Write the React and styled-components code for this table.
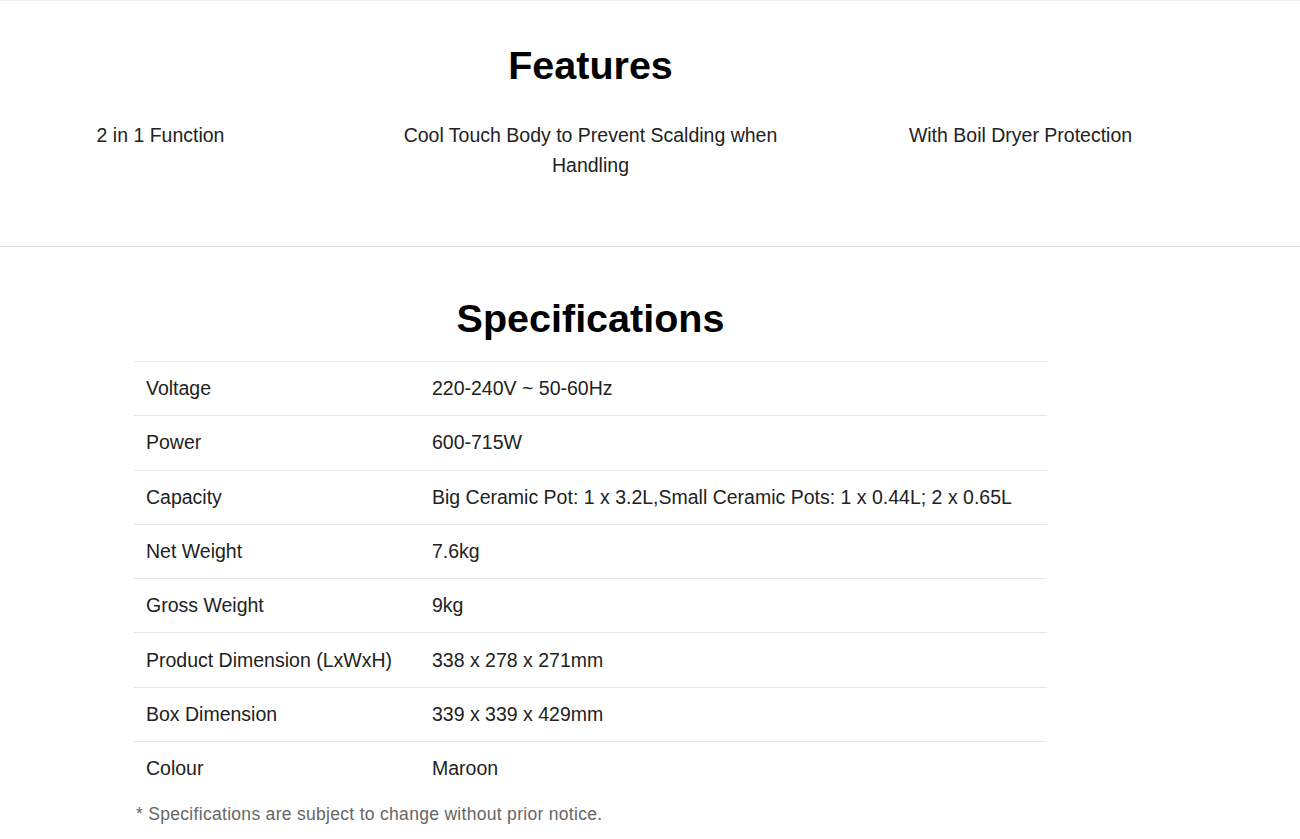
import React from "react";
import styled, { createGlobalStyle } from "styled-components";

const GlobalStyle = createGlobalStyle`
  body {
    margin: 0;
    background: #fff;
    font-family: "Liberation Sans", Arial, sans-serif;
    color: #222;
  }
`;

const features = [
  "2 in 1 Function",
  "Cool Touch Body to Prevent Scalding when Handling",
  "With Boil Dryer Protection",
];

const specs = [
  ["Voltage", "220-240V ~ 50-60Hz"],
  ["Power", "600-715W"],
  ["Capacity", "Big Ceramic Pot: 1 x 3.2L,Small Ceramic Pots: 1 x 0.44L; 2 x 0.65L"],
  ["Net Weight", "7.6kg"],
  ["Gross Weight", "9kg"],
  ["Product Dimension (LxWxH)", "338 x 278 x 271mm"],
  ["Box Dimension", "339 x 339 x 429mm"],
  ["Colour", "Maroon"],
];

function App() {
  return (
    <>
      <GlobalStyle />
      <FeaturesSection>
        <Inner>
          <Heading>Features</Heading>
          <FeatureRow>
            {features.map((f) => (
              <Feature key={f}>{f}</Feature>
            ))}
          </FeatureRow>
        </Inner>
      </FeaturesSection>
      <SpecsSection>
        <Inner>
          <Heading>Specifications</Heading>
          <SpecTable>
            <tbody>
              {specs.map(([label, value]) => (
                <Row key={label}>
                  <Label>{label}</Label>
                  <Value>{value}</Value>
                </Row>
              ))}
            </tbody>
          </SpecTable>
          <Note>* Specifications are subject to change without prior notice.</Note>
        </Inner>
      </SpecsSection>
    </>
  );
}

const FeaturesSection = styled.section`
  border-top: 1px solid #f0f0f0;
  border-bottom: 1px solid #dcdcdc;
  padding: 41px 0 66px;
`;

const SpecsSection = styled.section`
  padding: 48px 0 20px;
`;

const Inner = styled.div`
  width: 1181px;
`;

const Heading = styled.h2`
  margin: 0;
  text-align: center;
  font-size: 39.5px;
  line-height: 46px;
  font-weight: 700;
  color: #000;
`;

const FeatureRow = styled.div`
  display: flex;
  justify-content: center;
  gap: 20px;
  margin-top: 32px;
`;

const Feature = styled.p`
  flex: 0 0 410px;
  margin: 0;
  text-align: center;
  font-size: 19.5px;
  line-height: 30px;
  color: #222;
`;

const SpecTable = styled.table`
  width: 913px;
  margin: 20px auto 0;
  border-collapse: collapse;
`;

const Row = styled.tr`
  height: 54.3px;
  border-top: 1px solid #e6e6e6;
`;

const Label = styled.td`
  width: 262px;
  padding: 0 12px;
  font-size: 19.5px;
  color: #222;
  vertical-align: middle;
`;

const Value = styled.td`
  padding: 0 12px;
  font-size: 19.5px;
  color: #222;
  vertical-align: middle;
`;

const Note = styled.p`
  width: 913px;
  margin: 8px auto 0;
  padding-left: 2px;
  box-sizing: border-box;
  font-size: 17.5px;
  line-height: 20px;
  letter-spacing: 0.3px;
  color: #666;
`;

export default App;
